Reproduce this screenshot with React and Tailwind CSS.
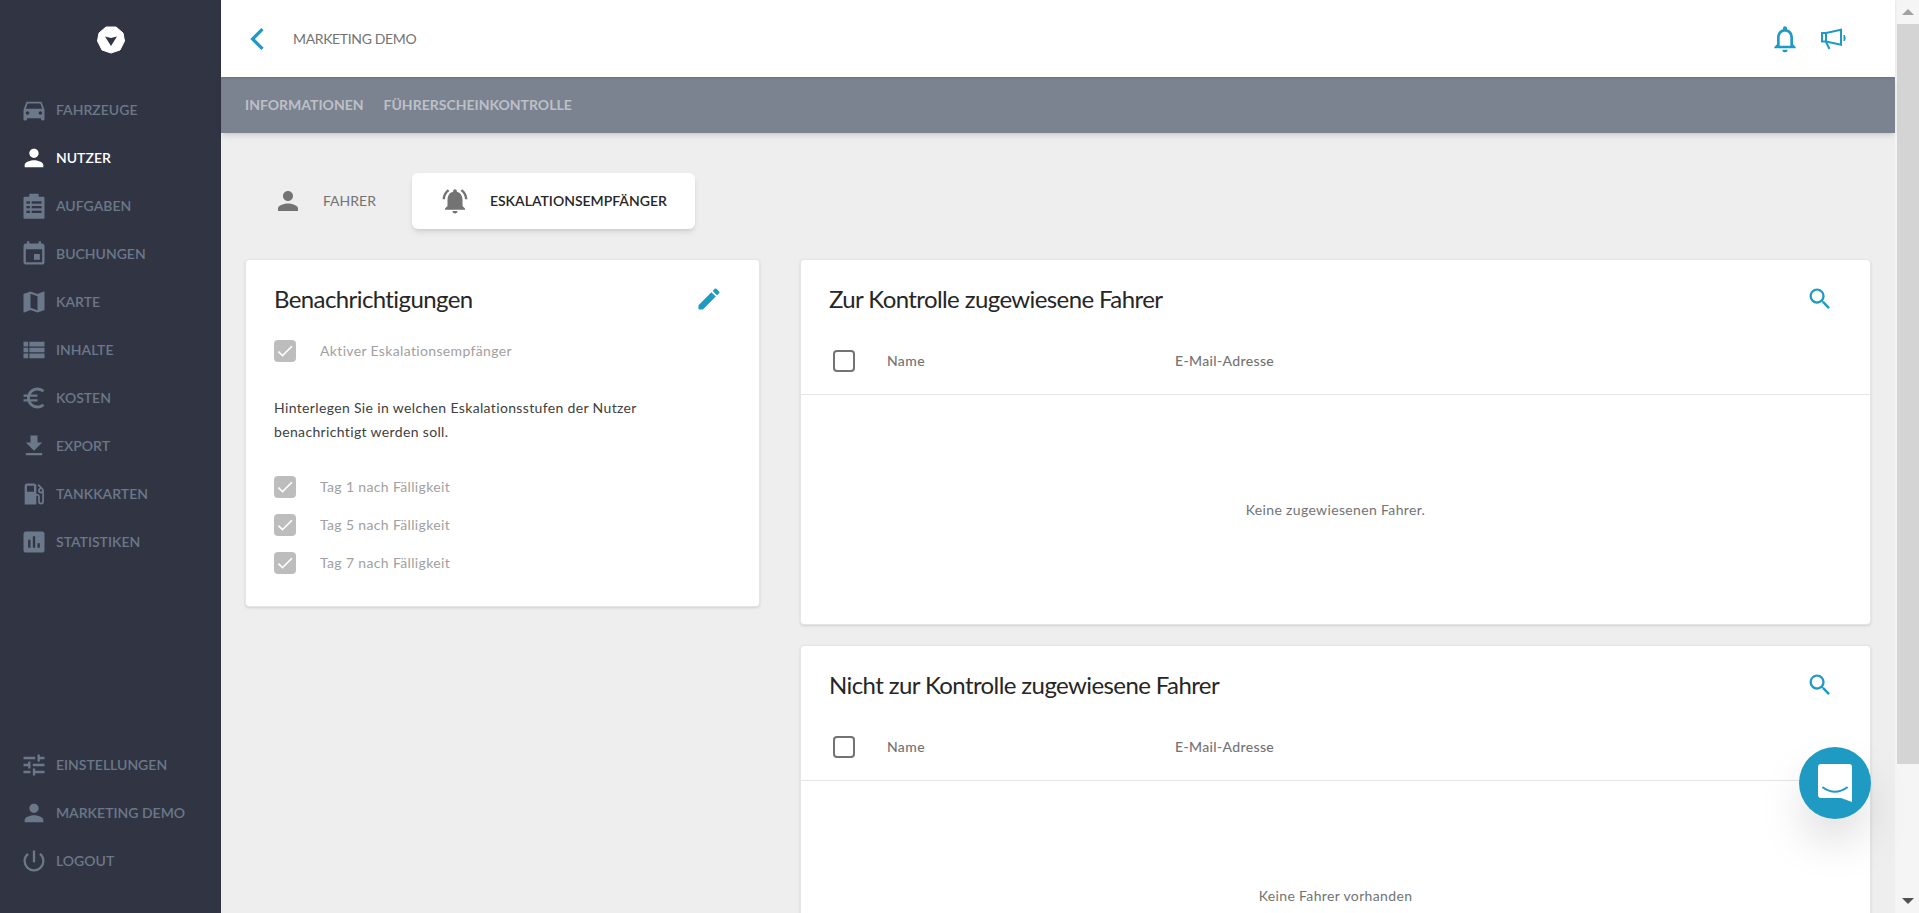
import React from "react";
import {
  MdDirectionsCar, MdPerson, MdEvent, MdMap, MdViewList, MdEuroSymbol, MdFileDownload,
  MdLocalGasStation, MdAssessment, MdTune, MdPowerSettingsNew, MdEdit, MdSearch,
  MdNotificationsActive, MdNotificationsNone, MdCheck,
} from "react-icons/md";

function Clipboard({ className }) {
  return (
    <svg viewBox="0 0 24 24" className={className} fill="currentColor">
      <path d="M8 1.500h8V4h4a1 1 0 0 1 1 1v17a1 1 0 0 1-1 1H4a1 1 0 0 1-1-1V5a1 1 0 0 1 1-1h4z" />
      <g fill="#313543">
        <rect x="5.500" y="8" width="3" height="2" />
        <rect x="10" y="8" width="8.500" height="2" />
        <rect x="5.500" y="12" width="3" height="2" />
        <rect x="10" y="12" width="8.500" height="2" />
        <rect x="5.500" y="16" width="3" height="2" />
        <rect x="10" y="16" width="8.500" height="2" />
      </g>
    </svg>
  );
}

const mainNav = [
  [MdDirectionsCar, "Fahrzeuge"],
  [MdPerson, "Nutzer", true],
  [Clipboard, "Aufgaben"],
  [MdEvent, "Buchungen"],
  [MdMap, "Karte"],
  [MdViewList, "Inhalte"],
  [MdEuroSymbol, "Kosten"],
  [MdFileDownload, "Export"],
  [MdLocalGasStation, "Tankkarten"],
  [MdAssessment, "Statistiken"],
];
const bottomNav = [
  [MdTune, "Einstellungen"],
  [MdPerson, "Marketing Demo"],
  [MdPowerSettingsNew, "Logout"],
];

function NavItem({ icon: Icon, label, active }) {
  return (
    <div className={`flex h-12 items-center gap-2 pl-5 text-sm font-semibold uppercase ${active ? "text-white" : "text-[#6b7889]"}`}>
      <Icon className="size-7 flex-none" />
      <span>{label}</span>
    </div>
  );
}

function Logo() {
  return (
    <svg viewBox="0 0 28 28" className="size-7 text-white">
      <path fill="currentColor" d="M9 1h10l7 6 1.500 8-4.500 9-9 3-9-3-4.500-9L2 7z" stroke="currentColor" strokeLinejoin="round" />
      <path fill="#313543" d="M8 10.500 14 12l6-1.500L14 20z" />
    </svg>
  );
}

function Megaphone() {
  return (
    <svg viewBox="0 0 26 22" className="h-5.5 w-6.5 text-[#1f9bc3]" fill="none" stroke="currentColor" strokeWidth="2">
      <path d="M1 5h4l15-3.200V16.800L5 13.500H1z" />
      <path d="M5 5v8.500M5 14l3.500 7" />
      <path d="M23 7c1.500 1.500 1.500 4.500 0 6z" fill="currentColor" strokeWidth="1" />
    </svg>
  );
}

function Check({ label }) {
  return (
    <div className="flex items-center gap-6 text-sm tracking-wide text-neutral-400">
      <span className="flex size-5.5 flex-none items-center justify-center rounded-sm bg-[#bdbdbd] text-white">
        <MdCheck className="size-5" />
      </span>
      <span>{label}</span>
    </div>
  );
}

function TableCard({ title, empty }) {
  return (
    <section className="rounded border border-neutral-200 bg-white shadow-sm">
      <div className="flex items-center justify-between px-7 pt-6">
        <h2 className="text-2xl leading-7.5 tracking-tight text-neutral-800">{title}</h2>
        <MdSearch className="mr-2 size-7 text-[#1f9bc3]" />
      </div>
      <div className="mt-3 flex items-center border-b border-neutral-200 pb-5.5 pt-6 text-sm font-medium tracking-wide text-neutral-500">
        <span className="ml-8 size-5.5 flex-none rounded-sm border-2 border-neutral-500" />
        <span className="ml-8 w-72">Name</span>
        <span>E-Mail-Adresse</span>
      </div>
      <div className="flex h-[229px] items-center justify-center text-sm tracking-wide text-neutral-500">{empty}</div>
    </section>
  );
}

export default function App() {
  return (
    <div className="relative flex h-screen overflow-hidden bg-[#eeeeee] font-['Lato','Noto_Sans',sans-serif]">
      <aside className="flex w-[221px] flex-none flex-col justify-between bg-[#313543] pb-7">
        <div>
          <div className="flex h-[86px] justify-center pt-6.5">
            <Logo />
          </div>
          {mainNav.map(([icon, label, active]) => (
            <NavItem key={label} icon={icon} label={label} active={active} />
          ))}
        </div>
        <div>
          {bottomNav.map(([icon, label]) => (
            <NavItem key={label} icon={icon} label={label} />
          ))}
        </div>
      </aside>

      <main className="flex min-w-0 flex-1 flex-col">
        <header className="relative z-20 flex h-[77px] flex-none items-center bg-white pl-7 pr-12 shadow-sm">
          <svg viewBox="0 0 14 22" className="h-6 w-4 text-[#1f9bc3]" fill="none" stroke="currentColor" strokeWidth="3">
            <path d="M12 2 3 11l9 9" />
          </svg>
          <span className="ml-7 text-sm uppercase tracking-tight text-neutral-500">Marketing Demo</span>
          <div className="ml-auto flex items-center gap-5">
            <MdNotificationsNone className="size-8 text-[#1f9bc3]" />
            <Megaphone />
          </div>
        </header>
        <nav className="relative z-10 flex h-14 flex-none items-center gap-5 bg-[#7b8290] px-6 text-sm font-bold uppercase text-white/50 shadow-md">
          <span>Informationen</span>
          <span>Führerscheinkontrolle</span>
        </nav>

        <div className="px-6 pt-10">
          <div className="mb-7.5 flex h-14 items-center">
            <div className="flex items-center gap-5 pl-7 pr-9 text-sm uppercase text-neutral-500">
              <MdPerson className="size-7.5" />
              <span>Fahrer</span>
            </div>
            <div className="flex h-full items-center gap-5 rounded-md bg-white px-7 text-sm font-semibold uppercase text-neutral-800 shadow-md">
              <MdNotificationsActive className="size-7.5 text-neutral-500" />
              <span>Eskalationsempfänger</span>
            </div>
          </div>

          <div className="flex items-start gap-10">
            <section className="w-[515px] flex-none rounded border border-neutral-200 bg-white px-7 pb-8 pt-6 shadow-sm">
              <div className="flex items-center justify-between">
                <h2 className="text-2xl leading-7.5 tracking-tight text-neutral-800">Benachrichtigungen</h2>
                <MdEdit className="mr-2 size-7 text-[#1f9bc3]" />
              </div>
              <div className="mt-6.5">
                <Check label="Aktiver Eskalationsempfänger" />
              </div>
              <p className="mt-8.5 text-sm leading-6 tracking-wide text-neutral-700">
                Hinterlegen Sie in welchen Eskalationsstufen der Nutzer
                <br />
                benachrichtigt werden soll.
              </p>
              <div className="mt-8 flex flex-col gap-4">
                <Check label="Tag 1 nach Fälligkeit" />
                <Check label="Tag 5 nach Fälligkeit" />
                <Check label="Tag 7 nach Fälligkeit" />
              </div>
            </section>

            <div className="flex min-w-0 flex-1 flex-col gap-5">
              <TableCard title="Zur Kontrolle zugewiesene Fahrer" empty="Keine zugewiesenen Fahrer." />
              <TableCard title="Nicht zur Kontrolle zugewiesene Fahrer" empty="Keine Fahrer vorhanden" />
            </div>
          </div>
        </div>
      </main>

      <div className="flex w-6 flex-none flex-col items-center justify-between bg-neutral-100 pl-0.5">
        <div className="flex h-6 w-full items-center justify-center">
          <span className="border-x-[6px] border-b-[6px] border-x-transparent border-b-neutral-400" />
        </div>
        <div className="h-[740px] w-full bg-neutral-300" />
        <div className="flex-1" />
        <div className="flex h-6 w-full items-center justify-center">
          <span className="border-x-[6px] border-t-[6px] border-x-transparent border-t-neutral-600" />
        </div>
      </div>

      <div className="absolute bottom-[94px] right-12 z-30 flex size-18 items-center justify-center rounded-full bg-[#1f9bc3] shadow-2xl">
        <svg viewBox="0 0 34 38" className="h-9.5 w-8.5" fill="none">
          <path fill="#fff" d="M3 0h28a3 3 0 0 1 3 3v35l-11-4H3a3 3 0 0 1-3-3V3a3 3 0 0 1 3-3z" />
          <path d="M5 23.500Q17 32 29 23.500" stroke="#1f9bc3" strokeWidth="2" strokeLinecap="round" />
        </svg>
      </div>
    </div>
  );
}
